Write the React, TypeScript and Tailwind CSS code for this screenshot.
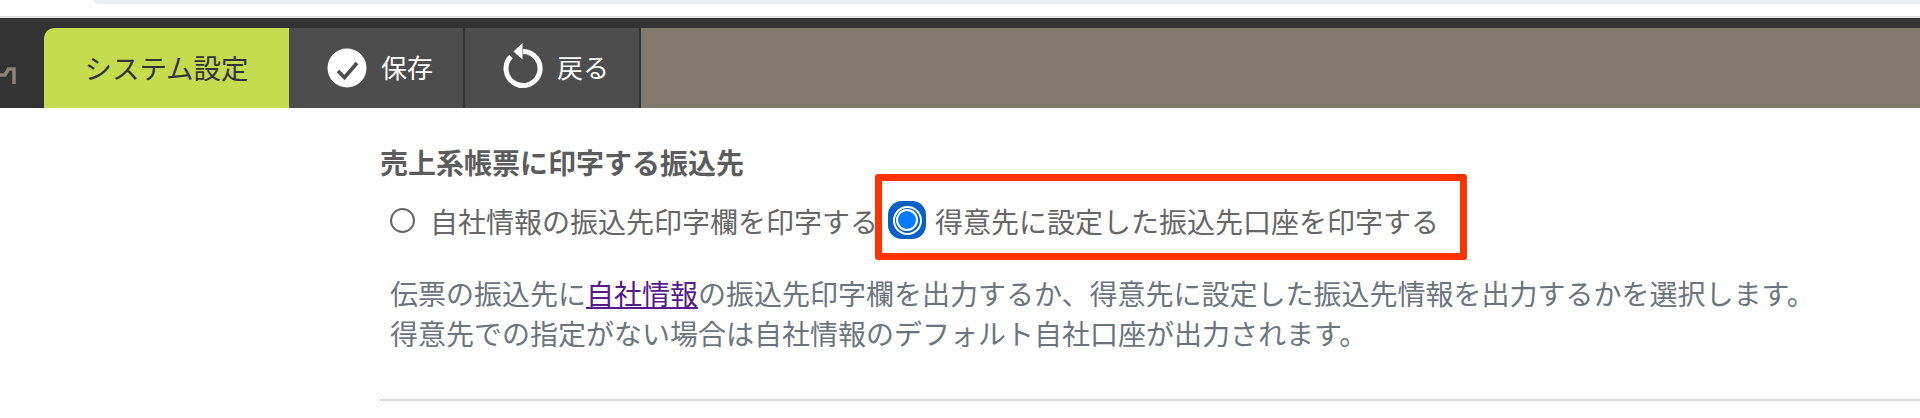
const fontStack = "font-['Noto_Sans_CJK_JP','Liberation_Sans',sans-serif]";

function CheckIcon() {
  return (
    <svg width="40" height="40" viewBox="0 0 40 40">
      <circle cx="20" cy="20" r="19.5" fill="#fff" />
      <path d="M11 23l6.500 6.500L30 15" fill="none" stroke="#4d4d4d" strokeWidth="3.6" />
    </svg>
  );
}

function BackIcon() {
  return (
    <svg width="40" height="50" viewBox="0 0 40 50">
      <path d="M20 8.500a17 17 0 1 1-12 5" fill="none" stroke="#fff" strokeWidth="5" />
      <path d="M19.500 0L10.500 8.500l9 8z" fill="#fff" />
    </svg>
  );
}

export default function App() {
  return (
    <div className={`h-[418px] w-[1920px] overflow-hidden bg-white ${fontStack}`}>
      <div className="h-[18px] border-b-2 border-[#dddddd]">
        <div className="ml-[94px] h-[4px] rounded-bl-[18px] bg-[#eeeef8]" />
      </div>

      <div className="relative flex h-[90px] bg-[#333333] pt-[10px] pl-[44px]">
        <svg className="absolute top-[48px] left-0" width="16" height="20" viewBox="0 0 16 20">
          <path d="M0 9h5l3.500-6H14v15" fill="none" stroke="#8a8378" strokeWidth="3.500" />
        </svg>
        <div className="flex h-[80px] w-[245px] items-center justify-center rounded-tl-[10px] bg-[#c5dc4e] text-[27.500px] text-[#333333]">
          システム設定
        </div>
        <div className="flex h-[80px] w-[174px] items-center gap-[14px] bg-[#4d4d4d] pl-[38px] text-[26px] text-white">
          <CheckIcon />
          <span className="mb-[3px]">保存</span>
        </div>
        <div className="ml-[2px] flex h-[80px] w-[174px] items-center gap-[14px] bg-[#4d4d4d] pl-[38px] text-[26px] text-white">
          <BackIcon />
          <span className="mb-[3px]">戻る</span>
        </div>
        <div className="ml-[2px] h-[80px] flex-1 bg-[#81796d]" />
      </div>

      <div className="pt-[34px] pl-[380px]">
        <h2 className="h-[40px] text-[28px] leading-[40px] font-bold text-[#5c5c5c]">
          売上系帳票に印字する振込先
        </h2>
        <div className="relative mt-[19px] flex h-[40px] items-center text-[28px] text-[#666666]">
          <span className="mb-[2px] ml-[10px] h-[25px] w-[25px] rounded-full border-2 border-[#666666] bg-white" />
          <span className="ml-[15px]">自社情報の振込先印字欄を印字する</span>
          <span className="mb-[2px] ml-[10px] flex h-[38px] w-[38px] items-center justify-center rounded-[14px] bg-[#0a5fc4]">
            <span className="flex h-[29px] w-[29px] items-center justify-center rounded-full bg-white">
              <span className="flex h-[25px] w-[25px] items-center justify-center rounded-full bg-[#0a5fc4]">
                <span className="flex h-[22px] w-[22px] items-center justify-center rounded-full bg-white">
                  <span className="h-[18px] w-[18px] rounded-full bg-[#0a7aff]" />
                </span>
              </span>
            </span>
          </span>
          <span className="ml-[9px]">得意先に設定した振込先口座を印字する</span>
          <div className="absolute top-[-27px] left-[495px] h-[86px] w-[592px] rounded-[3px] border-[7px] border-[#ff3300]" />
        </div>
        <p className="mt-[32px] ml-[10px] text-[28px] leading-[40px] text-[#6c757d]">
          伝票の振込先に
          <a className="text-[#551a8b] underline">自社情報</a>
          の振込先印字欄を出力するか、得意先に設定した振込先情報を出力するかを選択します。
          <br />
          得意先での指定がない場合は自社情報のデフォルト自社口座が出力されます。
        </p>
        <div className="mt-[46px] h-[2px] bg-[#d8dbdb]" />
      </div>
    </div>
  );
}
